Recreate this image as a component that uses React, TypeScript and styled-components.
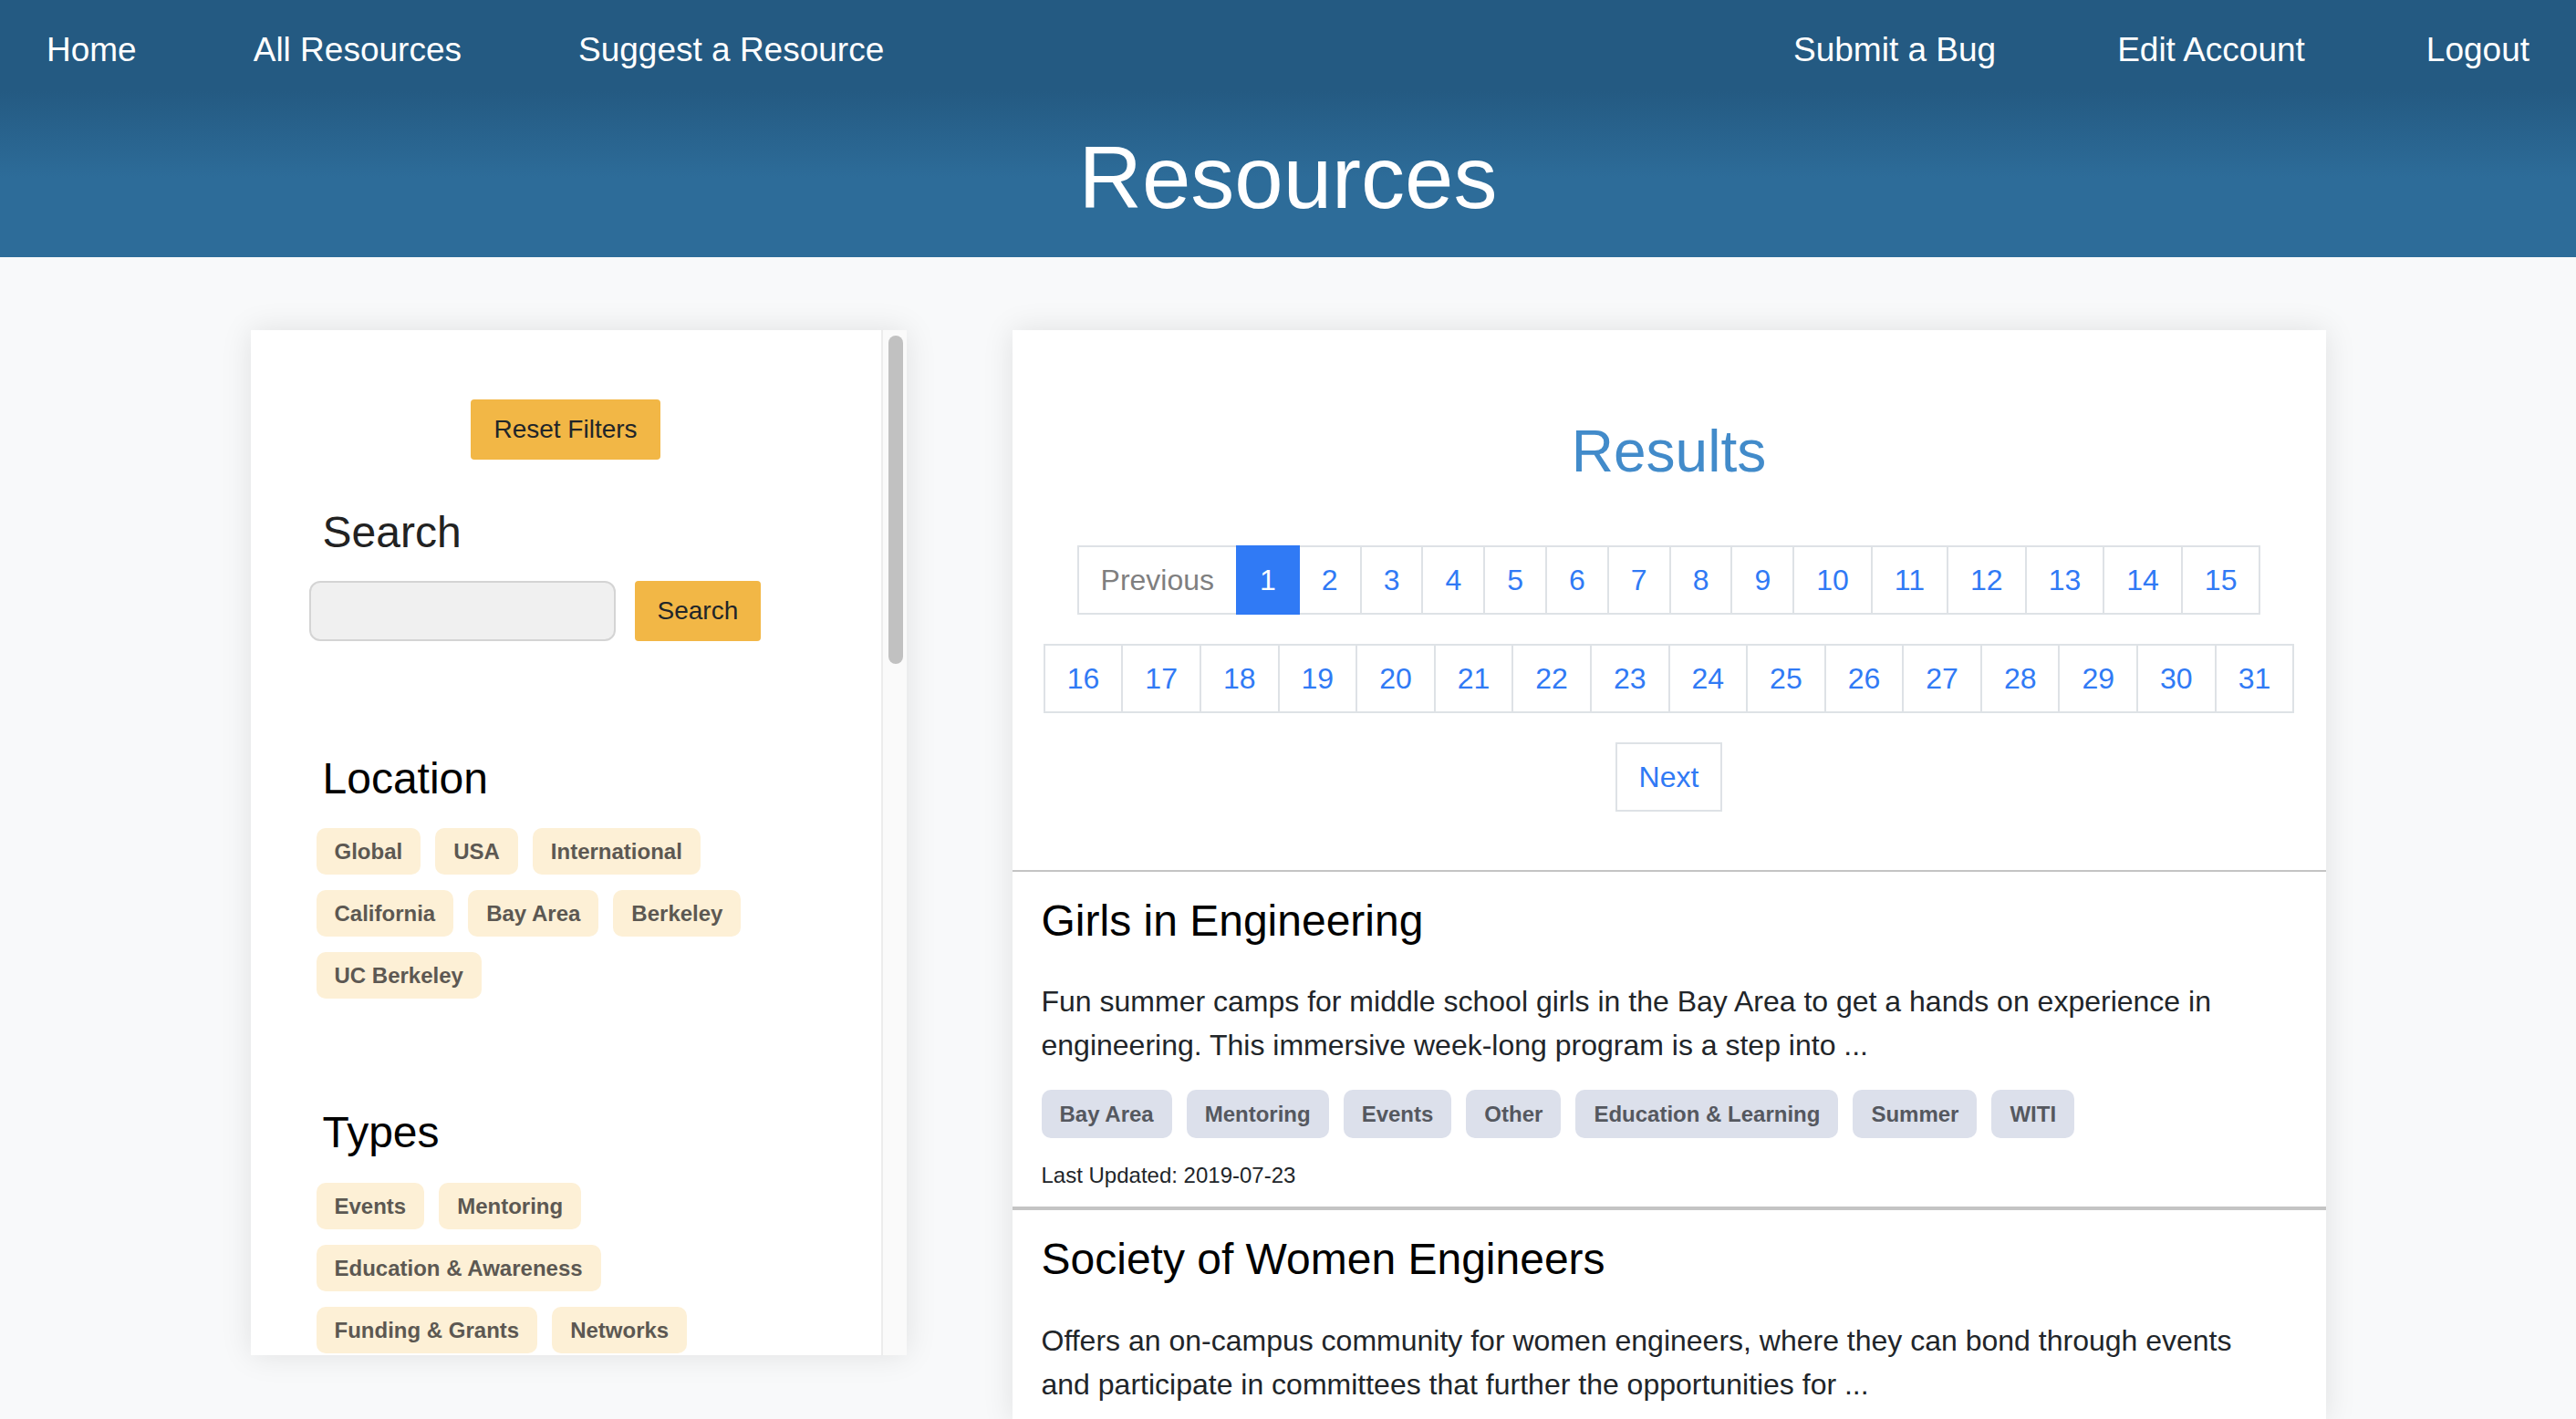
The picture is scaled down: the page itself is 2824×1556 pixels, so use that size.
import React from "react";
import styled, { createGlobalStyle } from "styled-components";

const GlobalStyle = createGlobalStyle`
  html, body {
    margin: 0;
    padding: 0;
    overflow: hidden;
    background: #f8f9fa;
  }
  body {
    font-family: "Liberation Sans", Arial, Helvetica, sans-serif;
    color: #212529;
  }
  * { box-sizing: border-box; }
`;

const Header = styled.header`
  background: linear-gradient(
    to bottom,
    #245a82 0px,
    #245a82 100px,
    #2d6c99 195px,
    #2d6c99 100%
  );
  padding: 28px 51px 30px 51px;
  color: #fff;
`;

const Nav = styled.nav`
  display: flex;
  justify-content: space-between;
`;

const NavGroup = styled.div<{ $gap: number }>`
  display: flex;
  gap: ${(p) => p.$gap}px;
`;

const NavLink = styled.a`
  font-size: 37px;
  line-height: 54px;
  color: #fff;
  text-decoration: none;
  white-space: nowrap;
`;

const PageTitle = styled.h1`
  margin: 55px 0 0;
  font-size: 96px;
  line-height: 115px;
  font-weight: 400;
  text-align: center;
`;

const Main = styled.main`
  display: flex;
  justify-content: center;
  align-items: flex-start;
  gap: 116px;
  padding-top: 80px;
`;

const Sidebar = styled.aside`
  width: 719px;
  height: 1124px;
  flex: none;
  display: flex;
  background: #fff;
  overflow: hidden;
  box-shadow: 0 0 32px rgba(0, 0, 0, 0.1);
`;

const SidebarContent = styled.div`
  flex: 1;
  min-width: 0;
  overflow: hidden;
  padding: 76px 64px 0 64px;
`;

const ScrollTrack = styled.div`
  width: 28px;
  flex: none;
  background: #fafafa;
  border-left: 2px solid #ececec;
  padding: 6px 4px 0 6px;
`;

const ScrollThumb = styled.div`
  height: 360px;
  border-radius: 8px;
  background: #c1c1c1;
`;

const YellowButton = styled.button`
  display: block;
  border: none;
  border-radius: 4px;
  background: #f2b746;
  color: #212529;
  font-family: inherit;
  font-size: 28px;
  line-height: 42px;
  padding: 12px 25px;
`;

const ResetButton = styled(YellowButton)`
  margin: 0 auto;
`;

const SectionTitle = styled.h3<{ $dark?: boolean }>`
  margin: 0 0 0 15px;
  font-size: 48px;
  line-height: 57.6px;
  font-weight: 400;
  color: ${(p) => (p.$dark ? "#000" : "#222")};
`;

const SearchBlock = styled.div`
  margin-top: 51px;
`;

const SearchForm = styled.form`
  display: flex;
  align-items: center;
  gap: 21px;
  margin-top: 24px;
`;

const SearchInput = styled.input`
  width: 336px;
  height: 66px;
  border: 2px solid #d4d4d4;
  border-radius: 12px;
  background: #f0f0f0;
  font-size: 28px;
  padding: 0 16px;
  outline: none;
`;

const FilterSection = styled.section`
  margin-top: 122px;

  & + & {
    margin-top: 118px;
  }
`;

const TagList = styled.div`
  display: flex;
  flex-wrap: wrap;
  gap: 17px 16px;
  margin: 26px 0 0 8px;
  max-width: 532px;
`;

const Tag = styled.span<{ $variant: "filter" | "result" }>`
  display: inline-block;
  padding: ${(p) => (p.$variant === "filter" ? "12px 20px" : "13px 20px")};
  font-size: 24px;
  line-height: 27px;
  font-weight: 700;
  border-radius: 10px;
  white-space: nowrap;
  background: ${(p) => (p.$variant === "filter" ? "#fdf0d6" : "#dce0eb")};
  color: ${(p) => (p.$variant === "filter" ? "#5c5852" : "#55585f")};
`;

const Results = styled.section`
  width: 1440px;
  flex: none;
  background: #fff;
  box-shadow: 0 0 32px rgba(0, 0, 0, 0.1);
  padding-top: 95px;
`;

const ResultsTitle = styled.h2`
  margin: 0;
  text-align: center;
  font-size: 64px;
  line-height: 76.8px;
  font-weight: 400;
  color: #428bca;
`;

const Pagination = styled.nav`
  display: flex;
  flex-direction: column;
  align-items: center;
  gap: 32px;
  margin-top: 64px;
  padding-bottom: 64px;
`;

const PageRow = styled.div`
  display: flex;
`;

const PageLink = styled.a<{ $active?: boolean; $muted?: boolean }>`
  display: block;
  padding: 16px 24px;
  font-size: 32px;
  line-height: 40px;
  border: 2px solid ${(p) => (p.$active ? "#307af5" : "#dee2e6")};
  margin-left: -2px;
  text-decoration: none;
  position: relative;
  z-index: ${(p) => (p.$active ? 1 : 0)};
  background: ${(p) => (p.$active ? "#307af5" : "#fff")};
  color: ${(p) => (p.$active ? "#fff" : p.$muted ? "#7f7f7f" : "#307af5")};

  &:first-child {
    margin-left: 0;
  }
`;

const Card = styled.article`
  border-top: 2px solid #c4c4c4;
  border-bottom: 2px solid #c4c4c4;
  padding: 25px 70px 16px 32px;
`;

const CardTitle = styled.h4`
  margin: 0;
  font-size: 48px;
  line-height: 57.6px;
  font-weight: 400;
  color: #000;
`;

const CardText = styled.p`
  margin: 36px 0 0;
  font-size: 32px;
  line-height: 48px;
  color: #212529;
`;

const CardTags = styled.div`
  display: flex;
  flex-wrap: wrap;
  gap: 16px;
  margin-top: 25px;
`;

const Updated = styled.div`
  margin-top: 23px;
  font-size: 24px;
  line-height: 36px;
  color: #212529;
`;

const leftLinks = ["Home", "All Resources", "Suggest a Resource"];
const rightLinks = ["Submit a Bug", "Edit Account", "Logout"];

const locations = [
  "Global",
  "USA",
  "International",
  "California",
  "Bay Area",
  "Berkeley",
  "UC Berkeley",
];

const types = [
  "Events",
  "Mentoring",
  "Education & Awareness",
  "Funding & Grants",
  "Networks",
];

const firstRow = Array.from({ length: 15 }, (_, i) => i + 1);
const secondRow = Array.from({ length: 16 }, (_, i) => i + 16);

const resources = [
  {
    title: "Girls in Engineering",
    text:
      "Fun summer camps for middle school girls in the Bay Area to get a hands on experience in engineering. This immersive week-long program is a step into ...",
    tags: [
      "Bay Area",
      "Mentoring",
      "Events",
      "Other",
      "Education & Learning",
      "Summer",
      "WITI",
    ],
    updated: "2019-07-23",
  },
  {
    title: "Society of Women Engineers",
    text:
      "Offers an on-campus community for women engineers, where they can bond through events and participate in committees that further the opportunities for ...",
    tags: [],
    updated: "",
  },
];

export default function App() {
  return (
    <>
      <GlobalStyle />
      <Header>
        <Nav>
          <NavGroup $gap={128}>
            {leftLinks.map((l) => (
              <NavLink key={l} href="#">
                {l}
              </NavLink>
            ))}
          </NavGroup>
          <NavGroup $gap={133}>
            {rightLinks.map((l) => (
              <NavLink key={l} href="#">
                {l}
              </NavLink>
            ))}
          </NavGroup>
        </Nav>
        <PageTitle>Resources</PageTitle>
      </Header>
      <Main>
        <Sidebar>
          <SidebarContent>
            <ResetButton type="button">Reset Filters</ResetButton>
            <SearchBlock>
              <SectionTitle>Search</SectionTitle>
              <SearchForm onSubmit={(e) => e.preventDefault()}>
                <SearchInput type="text" />
                <YellowButton type="submit">Search</YellowButton>
              </SearchForm>
            </SearchBlock>
            <FilterSection>
              <SectionTitle $dark>Location</SectionTitle>
              <TagList>
                {locations.map((t) => (
                  <Tag key={t} $variant="filter">
                    {t}
                  </Tag>
                ))}
              </TagList>
            </FilterSection>
            <FilterSection>
              <SectionTitle $dark>Types</SectionTitle>
              <TagList>
                {types.map((t) => (
                  <Tag key={t} $variant="filter">
                    {t}
                  </Tag>
                ))}
              </TagList>
            </FilterSection>
          </SidebarContent>
          <ScrollTrack>
            <ScrollThumb />
          </ScrollTrack>
        </Sidebar>
        <Results>
          <ResultsTitle>Results</ResultsTitle>
          <Pagination>
            <PageRow>
              <PageLink href="#" $muted>
                Previous
              </PageLink>
              {firstRow.map((n) => (
                <PageLink key={n} href="#" $active={n === 1}>
                  {n}
                </PageLink>
              ))}
            </PageRow>
            <PageRow>
              {secondRow.map((n) => (
                <PageLink key={n} href="#">
                  {n}
                </PageLink>
              ))}
            </PageRow>
            <PageRow>
              <PageLink href="#">Next</PageLink>
            </PageRow>
          </Pagination>
          {resources.map((r) => (
            <Card key={r.title}>
              <CardTitle>{r.title}</CardTitle>
              <CardText>{r.text}</CardText>
              {r.tags.length > 0 && (
                <CardTags>
                  {r.tags.map((t) => (
                    <Tag key={t} $variant="result">
                      {t}
                    </Tag>
                  ))}
                </CardTags>
              )}
              {r.updated && <Updated>Last Updated: {r.updated}</Updated>}
            </Card>
          ))}
        </Results>
      </Main>
    </>
  );
}
